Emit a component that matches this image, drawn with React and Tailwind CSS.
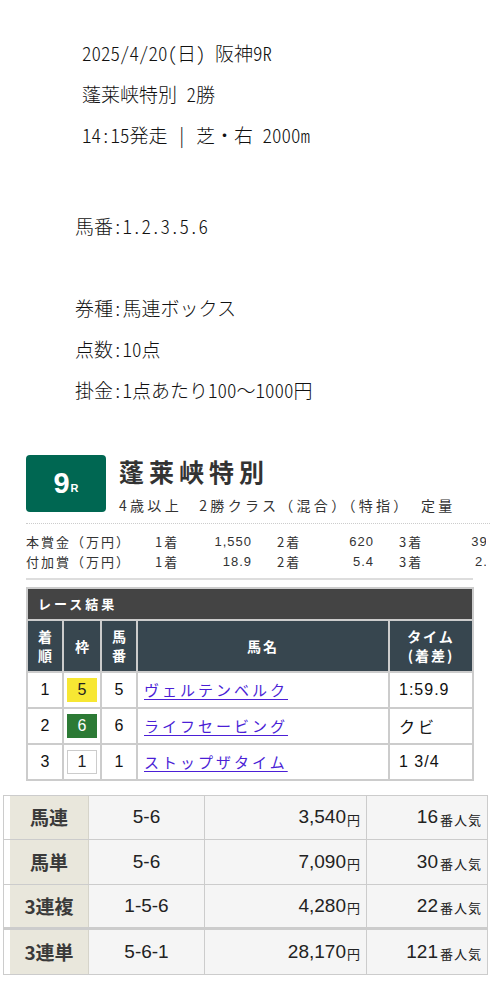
import React from 'react';

const JP = { fontFamily: '"Noto Sans CJK JP", "Liberation Sans", sans-serif' };
const NUM = { fontFamily: '"Liberation Sans", "Noto Sans CJK JP", sans-serif' };

const RESULTS = [
  { rank: 1, waku: 5, num: 5, name: 'ヴェルテンベルク', time: '1:59.9' },
  { rank: 2, waku: 6, num: 6, name: 'ライフセービング', time: 'クビ' },
  { rank: 3, waku: 1, num: 1, name: 'ストップザタイム', time: '1 3/4' },
];

const PAYOUTS = [
  { type: '馬連', combo: '5-6', yen: '3,540', pop: '16' },
  { type: '馬単', combo: '5-6', yen: '7,090', pop: '30' },
  { type: '3連複', combo: '1-5-6', yen: '4,280', pop: '22' },
  { type: '3連単', combo: '5-6-1', yen: '28,170', pop: '121' },
];

const wakuClass = {
  5: 'bg-[#f7e733] text-[#222]',
  6: 'bg-[#2c7a35] text-white',
  1: 'bg-white text-[#222] border border-[#ccc]',
};

const App = () => {
  return (
    <div className="w-[490px] min-h-[981px] bg-white text-[#111] overflow-hidden" style={JP}>
      {/* POST TEXT */}
      <div className="pt-[32px] text-[19px] leading-[41px] font-light [font-feature-settings:'hwid']">
        <div className="pl-[82px]">
          <p>2025/4/20(日) 阪神9R</p>
          <p>蓬莱峡特別 2勝</p>
          <p>14:15発走 | 芝・右 2000m</p>
        </div>
        <div className="pl-[75px] mt-[50px]">
          <p>馬番:1.2.3.5.6</p>
          <p className="mt-[41px]">券種:馬連ボックス</p>
          <p>点数:10点</p>
          <p>掛金:1点あたり100<span className="[font-feature-settings:normal]">〜</span>1000円</p>
        </div>
      </div>

      {/* RACE HEADER */}
      <div className="mt-[45px] pl-[26px]">
        <div className="flex gap-[13px]">
          <div className="w-[80px] h-[57px] rounded-[4px] bg-[#006752] flex items-center justify-center text-white" style={NUM}>
            <span className="text-[29px] font-bold leading-none">9</span>
            <span className="text-[11px] font-bold mt-[10px] ml-[1px]">R</span>
          </div>
          <div className="flex flex-col">
            <h2 className="text-[25px] font-bold tracking-[5px] text-[#333] leading-[30px] mt-[1px] whitespace-nowrap">蓬莱峡特別</h2>
            <p className="text-[14px] tracking-[3.3px] text-[#333] mt-[11px] leading-[16px] whitespace-nowrap">4歳以上　2勝クラス（混合）（特指）　定量</p>
          </div>
        </div>
        <div className="mt-[10px] border-t border-dotted border-[#ccc] w-[464px]"></div>
        <div className="mt-[8px] w-[460px] overflow-hidden text-[13px] leading-[20px] tracking-[2px] text-[#333] whitespace-nowrap">
          {[
            ['本賞金（万円）', '1,550', '620', '390'],
            ['付加賞（万円）', '18.9', '5.4', '2.7'],
          ].map((r) => (
            <div key={r[0]} className="flex">
              <span className="w-[129px] shrink-0">{r[0]}</span>
              <span className="w-[40px] shrink-0">1着</span>
              <span className="w-[57px] shrink-0 text-right tracking-[1px]" style={NUM}>{r[1]}</span>
              <span className="w-[25px] shrink-0"></span>
              <span className="w-[40px] shrink-0">2着</span>
              <span className="w-[57px] shrink-0 text-right tracking-[1px]" style={NUM}>{r[2]}</span>
              <span className="w-[25px] shrink-0"></span>
              <span className="w-[40px] shrink-0">3着</span>
              <span className="w-[57px] shrink-0 text-right tracking-[1px]" style={NUM}>{r[3]}</span>
            </div>
          ))}
        </div>
        <div className="mt-[6px] h-[2px] bg-[#ddd] w-[447px]"></div>
      </div>

      {/* RESULTS TABLE */}
      <div className="ml-[26px] mt-[7px] w-[448px] bg-[#ccc] p-[2px]">
        <div className="h-[30px] bg-[#444] text-white text-[13px] font-bold tracking-[3px] pl-[10px] flex items-center">レース結果</div>
        <div className="grid grid-cols-[34px_36px_34px_250px_82px] gap-[2px] mt-[2px]">
          <div className="h-[50px] bg-[#37464f] text-white text-[14px] font-bold leading-[19px] flex flex-col items-center justify-center"><span>着</span><span>順</span></div>
          <div className="h-[50px] bg-[#37464f] text-white text-[14px] font-bold flex items-center justify-center">枠</div>
          <div className="h-[50px] bg-[#37464f] text-white text-[14px] font-bold leading-[19px] flex flex-col items-center justify-center"><span>馬</span><span>番</span></div>
          <div className="h-[50px] bg-[#37464f] text-white text-[14px] font-bold tracking-[2px] flex items-center justify-center">馬名</div>
          <div className="h-[50px] bg-[#37464f] text-white text-[14px] font-bold tracking-[2px] leading-[19px] flex flex-col items-center justify-center"><span>タイム</span><span>(着差)</span></div>
          {RESULTS.map((r) => (
            <React.Fragment key={r.rank}>
              <div className="h-[34px] bg-white flex items-center justify-center text-[16px]" style={NUM}>{r.rank}</div>
              <div className="h-[34px] bg-white flex items-center justify-center">
                <span className={`w-[30px] h-[24px] flex items-center justify-center text-[16px] ${wakuClass[r.waku]}`} style={NUM}>{r.waku}</span>
              </div>
              <div className="h-[34px] bg-white flex items-center justify-center text-[16px]" style={NUM}>{r.num}</div>
              <div className="h-[34px] bg-white flex items-center pl-[6px]">
                <a href="#" className="text-[15px] tracking-[3px] text-[#4b1fd6] underline underline-offset-[3px]">{r.name}</a>
              </div>
              <div className="h-[34px] bg-white flex items-center pl-[9px] text-[16px] tracking-[1px]" style={NUM}>
                {r.time === 'クビ' ? <span style={JP} className="tracking-[3px]">{r.time}</span> : r.time}
              </div>
            </React.Fragment>
          ))}
        </div>
      </div>

      {/* PAYOUT TABLE */}
      <div className="mt-[14px] ml-[3px] w-[485px] border-l border-[#ccc]">
        {PAYOUTS.map((p, i) => (
          <div
            key={p.type}
            className={`flex h-[45px] ${i === 0 ? 'border-t border-[#ccc]' : ''} ${i === 2 ? 'border-b-[3px] border-b-[#ccc]' : 'border-b border-[#ccc]'}`}
          >
            <div className="w-[85px] bg-[#e9e7dc] shadow-[inset_6px_0_0_#fff] pl-[6px] flex items-center justify-center text-[19px] font-bold text-[#3a3a3a] border-r border-[#d6d4ca]">
              {p.type}
            </div>
            <div className="w-[116px] bg-[#f5f5f5] flex items-center justify-center text-[19px] text-[#222] border-r border-[#ccc]" style={NUM}>{p.combo}</div>
            <div className="w-[162px] bg-[#f5f5f5] flex items-center justify-end pr-[6px] text-[#222] border-r border-[#ccc]">
              <span className="text-[19px]" style={NUM}>{p.yen}</span>
              <span className="text-[13px] ml-[1px] mt-[4px]">円</span>
            </div>
            <div className="w-[121px] bg-[#f5f5f5] flex items-center justify-end pr-[5px] text-[#222] border-r border-[#ccc]">
              <span className="text-[19px]" style={NUM}>{p.pop}</span>
              <span className="text-[13px] ml-[2px] mt-[4px] tracking-[1px]">番人気</span>
            </div>
          </div>
        ))}
      </div>
    </div>
  );
};

export default App;
